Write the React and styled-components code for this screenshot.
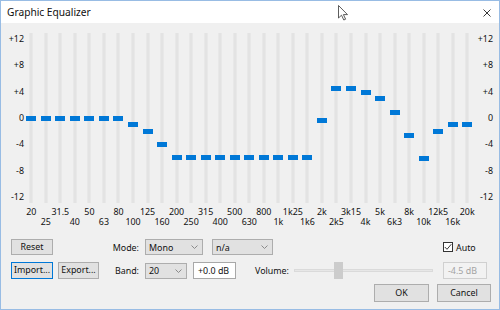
import React from "react";
import styled, { createGlobalStyle } from "styled-components";

const Global = createGlobalStyle`
  html, body { margin: 0; padding: 0; background: #f0f0f0; }
  * { box-sizing: border-box; }
`;

const FONT = `"Noto Sans", "Open Sans", sans-serif`;

const Window = styled.div`
  position: relative;
  width: 500px;
  height: 310px;
  border: 1px solid #98bce4;
  display: flex;
  flex-direction: column;
  font-family: ${FONT};
  font-size: 8.9px;
  color: #111;
  overflow: hidden;
`;

const TitleBar = styled.div`
  height: 22px;
  flex: none;
  background: #fff;
  display: flex;
  align-items: center;
  justify-content: space-between;
  padding: 0 8px 0 6px;
  font-size: 10.2px;
  color: #111;
`;

const CloseIcon = styled.svg`
  width: 8px;
  height: 8px;
  margin-top: 1px;
`;

const Body = styled.div`
  flex: 1;
  background: #f0f0f0;
  display: flex;
  flex-direction: column;
`;

const EqRow = styled.div`
  display: flex;
  margin-top: 10px;
  height: 196px;
`;

const Scale = styled.div`
  width: ${(p) => p.$w}px;
  height: 170px;
  display: flex;
  flex-direction: column;
  justify-content: space-between;
  text-align: right;
  padding-right: ${(p) => p.$pr}px;
  line-height: 12px;
`;

const Bands = styled.div`
  width: 450.5px;
  display: grid;
  grid-template-columns: repeat(31, 1fr);
`;

const BandCol = styled.div`
  display: flex;
  flex-direction: column;
  align-items: center;
  min-width: 0;
`;

const Track = styled.div`
  position: relative;
  width: 4px;
  height: 170px;
  background: #e3e3e3;
  border-left: 1px solid #e8e8e8;
  border-right: 1px solid #e8e8e8;
`;

const Thumb = styled.div`
  position: absolute;
  left: 50%;
  width: 10px;
  height: 5px;
  margin-left: -5px;
  background: #0078d7;
`;

const FreqLabel = styled.div`
  margin-top: ${(p) => (p.$row ? 13 : 3)}px;
  line-height: 12px;
  white-space: nowrap;
`;

const Controls = styled.div`
  display: flex;
  flex-direction: column;
  margin-top: 10px;
`;

const Row = styled.div`
  display: flex;
  align-items: center;
  height: ${(p) => p.$h}px;
  margin-top: ${(p) => p.$mt || 0}px;
  padding-left: ${(p) => (p.$end ? 0 : 10)}px;
  padding-right: ${(p) => p.$pr || 0}px;
  justify-content: ${(p) => (p.$end ? "flex-end" : "flex-start")};
`;

const Button = styled.div`
  width: ${(p) => p.$w}px;
  height: 100%;
  margin-left: ${(p) => p.$ml || 0}px;
  background: #e1e1e1;
  border: 1px solid ${(p) => (p.$focus ? "#0078d7" : "#adadad")};
  display: flex;
  align-items: center;
  justify-content: center;
  line-height: 1;
  white-space: nowrap;
`;

const Label = styled.div`
  width: ${(p) => (p.$w ? `${p.$w}px` : "auto")};
  text-align: right;
  margin-left: ${(p) => p.$ml || 0}px;
  margin-right: ${(p) => p.$mr || 6}px;
  white-space: nowrap;
`;

const Select = styled.div`
  width: ${(p) => p.$w}px;
  height: 16px;
  margin-left: ${(p) => p.$ml || 0}px;
  background: #e1e1e1;
  border: 1px solid #adadad;
  display: flex;
  align-items: center;
  justify-content: space-between;
  padding: 0 4px 0 3px;
`;

const Chevron = styled.svg`
  width: 7px;
  height: 4px;
`;

const TextBox = styled.div`
  width: ${(p) => p.$w}px;
  height: 17px;
  margin-left: ${(p) => p.$ml || 0}px;
  background: ${(p) => (p.$disabled ? "#f2f2f2" : "#fff")};
  border: 1px solid ${(p) => (p.$disabled ? "#d0d0d0" : "#a8a8a8")};
  color: ${(p) => (p.$disabled ? "#a3a3a3" : "#111")};
  display: flex;
  align-items: center;
  padding-left: 4px;
  white-space: nowrap;
`;

const Spacer = styled.div`
  flex: 1;
`;

const RightCell = styled.div`
  width: 44px;
  margin-right: 12px;
  display: flex;
  align-items: center;
  gap: 3px;
`;

const CheckBox = styled.div`
  width: 10px;
  height: 10px;
  border: 1px solid #333;
  background: #fff;
  display: flex;
  align-items: center;
  justify-content: center;
`;

const Slider = styled.div`
  position: relative;
  flex: 1;
  height: 17px;
  display: flex;
  align-items: center;
  margin-right: 10px;
`;

const SliderRail = styled.div`
  width: 100%;
  height: 3px;
  background: #e7e7e7;
  border: 1px solid #dadada;
`;

const SliderThumb = styled.div`
  position: absolute;
  top: 0;
  width: 9px;
  height: 17px;
  background: #cccccc;
`;

const Cursor = styled.svg`
  position: absolute;
  left: 337px;
  top: 4px;
  width: 11px;
  height: 16px;
`;

const bands = [
  ["20", 0], ["25", 0], ["31.5", 0], ["40", 0], ["50", 0], ["63", 0], ["80", 0],
  ["100", -1], ["125", -2], ["160", -4], ["200", -6], ["250", -6], ["315", -6],
  ["400", -6], ["500", -6], ["630", -6], ["800", -6], ["1k", -6], ["1k25", -6],
  ["1k6", -6], ["2k", -0.4], ["2k5", 4.5], ["3k15", 4.5], ["4k", 3.8], ["5k", 2.9],
  ["6k3", 0.8], ["8k", -2.7], ["10k", -6.2], ["12k5", -2], ["16k", -1], ["20k", -1],
];

const scale = ["+12", "+8", "+4", "0", "-4", "-8", "-12"];

const ChevronDown = () => (
  <Chevron viewBox="0 0 7 4">
    <path d="M0.5 0.5 L3.5 3.5 L6.5 0.5" fill="none" stroke="#8a8a8a" strokeWidth="1" />
  </Chevron>
);

export default function App() {
  return (
    <>
      <Global />
      <Window>
        <TitleBar>
          <span>Graphic Equalizer</span>
          <CloseIcon viewBox="0 0 8 8">
            <path d="M0.5 0.5 L7.5 7.5 M7.5 0.5 L0.5 7.5" stroke="#222" strokeWidth="0.9" />
          </CloseIcon>
        </TitleBar>
        <Body>
          <EqRow>
            <Scale $w={23} $pr={0}>
              {scale.map((s) => (
                <div key={s}>{s}</div>
              ))}
            </Scale>
            <Bands>
              {bands.map(([f, v], i) => (
                <BandCol key={f}>
                  <Track>
                    <Thumb style={{ top: `${85 - v * 6.58 - 2.5}px` }} />
                  </Track>
                  <FreqLabel $row={i % 2}>{f}</FreqLabel>
                </BandCol>
              ))}
            </Bands>
            <Scale $w={24.5} $pr={6}>
              {scale.map((s) => (
                <div key={s}>{s}</div>
              ))}
            </Scale>
          </EqRow>
          <Controls>
            <Row $h={16}>
              <Button $w={42}>Reset</Button>
              <Label $w={86}>Mode:</Label>
              <Select $w={58}>
                <span>Mono</span>
                <ChevronDown />
              </Select>
              <Select $w={61} $ml={9}>
                <span>n/a</span>
                <ChevronDown />
              </Select>
              <Spacer />
              <RightCell>
                <CheckBox>
                  <svg width="8" height="8" viewBox="0 0 8 8">
                    <path d="M0.8 4 L3 6.3 L7.3 1.2" fill="none" stroke="#222" strokeWidth="0.9" />
                  </svg>
                </CheckBox>
                <span>Auto</span>
              </RightCell>
            </Row>
            <Row $h={17} $mt={7}>
              <Button $w={42} $focus>Import...</Button>
              <Button $w={41} $ml={5}>Export...</Button>
              <Label $w={40}>Band:</Label>
              <Select $w={42}>
                <span>20</span>
                <ChevronDown />
              </Select>
              <TextBox $w={43} $ml={6}>+0.0 dB</TextBox>
              <Label $ml={19} $mr={5}>Volume:</Label>
              <Slider>
                <SliderRail />
                <SliderThumb style={{ left: `${(40 / 140) * 100}%` }} />
              </Slider>
              <RightCell>
                <TextBox $w={44} $disabled>-4.5 dB</TextBox>
              </RightCell>
            </Row>
            <Row $h={18} $mt={5} $end $pr={8}>
              <Button $w={55}>OK</Button>
              <Button $w={54} $ml={8}>Cancel</Button>
            </Row>
          </Controls>
        </Body>
        <Cursor viewBox="0 0 11 16">
          <path d="M0.5 0.5 L0.5 13 L3.5 10.2 L5.8 15 L7.6 14.2 L5.4 9.6 L9.5 9.6 Z" fill="#fff" stroke="#333" strokeWidth="0.8" strokeLinejoin="round" />
        </Cursor>
      </Window>
    </>
  );
}
